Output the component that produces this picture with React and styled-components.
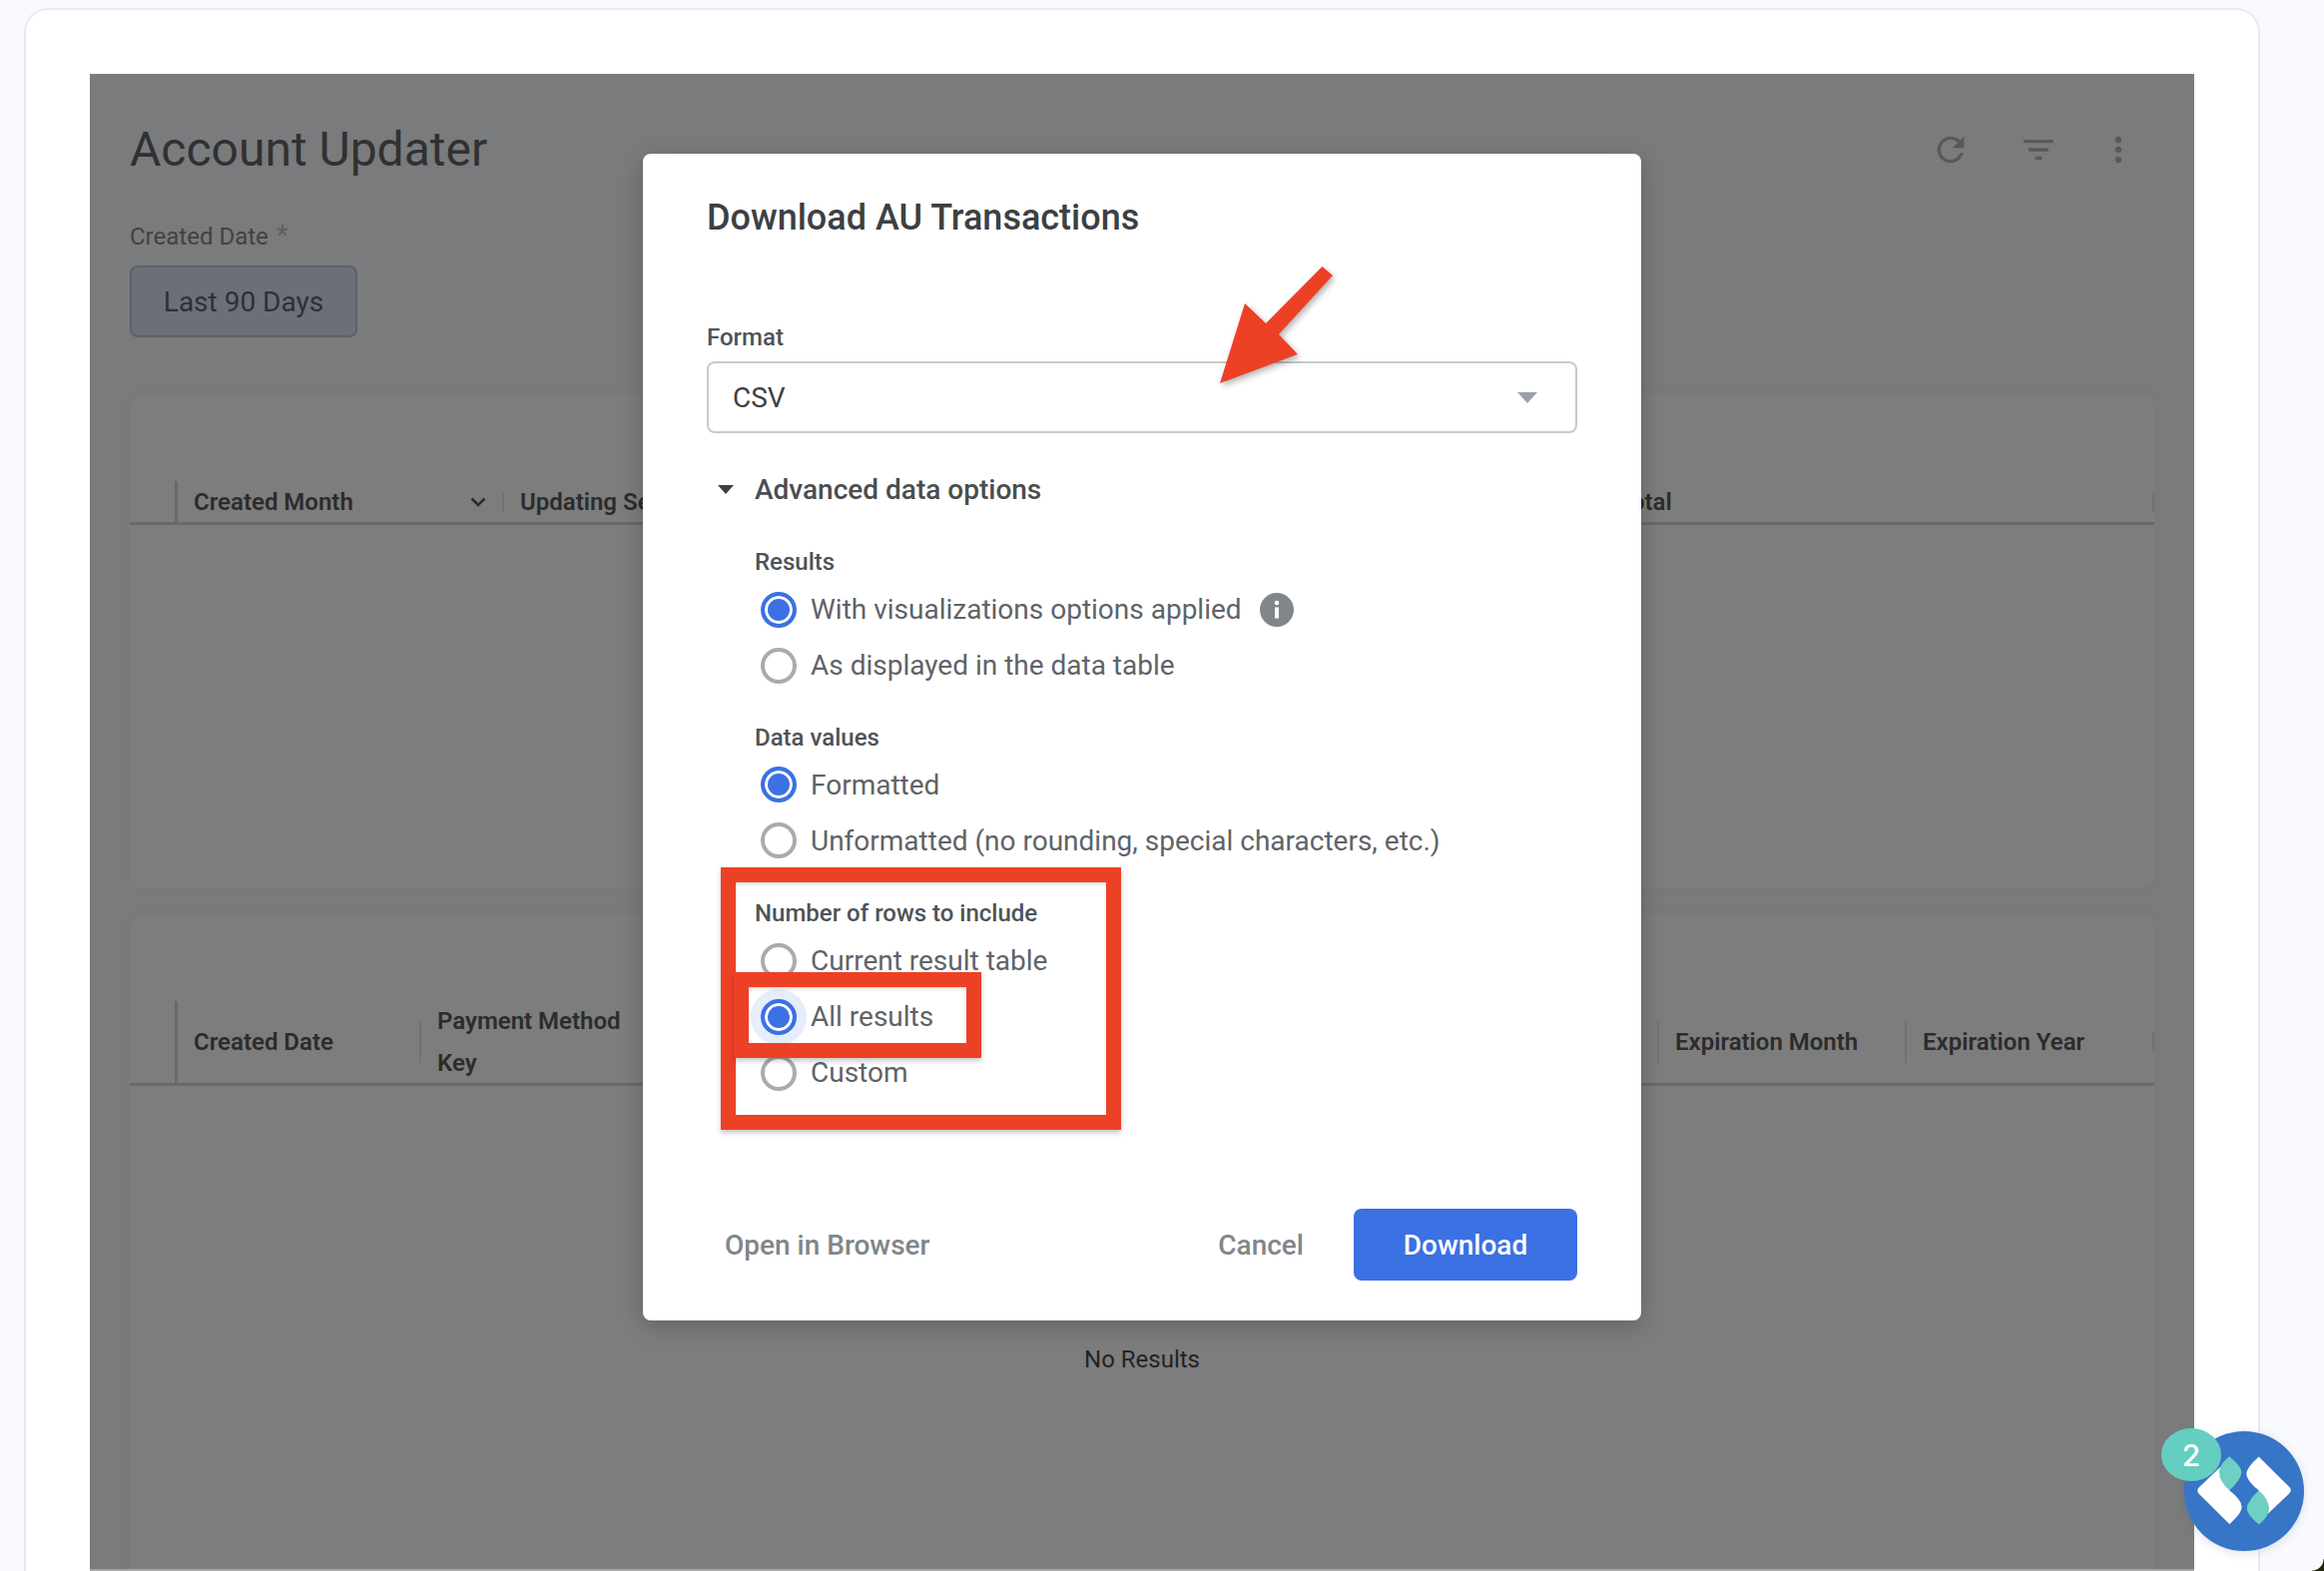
import React from "react";
import styled, { createGlobalStyle } from "styled-components";

const Global = createGlobalStyle`
  html, body { margin: 0; padding: 0; background: #f9fafe; }
  body { width: 2328px; height: 1574px; overflow: hidden; font-family: Roboto, "Liberation Sans", sans-serif; }
  * { box-sizing: border-box; }
`;

const Page = styled.div`
  position: relative;
  width: 2328px;
  height: 1574px;
  overflow: hidden;
  padding: 8px 0 0 24px;
`;

const ScreenCorner = styled.div`
  position: absolute;
  right: 0;
  bottom: 0;
  width: 12px;
  height: 12px;
  background: radial-gradient(circle at 0 0, transparent 11px, #23260f 12px);
`;

const Sheet = styled.div`
  width: 2240px;
  height: 1600px;
  background: #fff;
  border: 2px solid #e8eaf1;
  border-radius: 24px;
  padding: 64px 64px 0 64px;
`;

const Panel = styled.div`
  height: 1500px;
  background: #7a7b7c;
  border-bottom: 2px solid #a6a6a6;
  padding: 48px 40px 0;
  overflow: hidden;
`;

const TitleRow = styled.div`
  display: flex;
  align-items: center;
  justify-content: space-between;
  height: 56px;
`;

const Title = styled.h1`
  margin: 0;
  font-size: 48px;
  font-weight: 400;
  line-height: 56px;
  color: #303133;
`;

const Tools = styled.div`
  display: flex;
  gap: 40px;
  margin-right: 16px;
  color: #58595b;
`;

const ToolIcon = styled.svg`
  display: block;
  width: 40px;
  height: 40px;
  fill: currentColor;
  margin-right: ${(p) => p.$after || 0}px;
`;

const FieldLabel = styled.div`
  margin-top: 44px;
  height: 30px;
  font-size: 24px;
  line-height: 30px;
  color: #414244;
  span { color: #5f6062; font-size: 28px; line-height: 0; margin-left: 2px; }
`;

const RangeButton = styled.div`
  display: flex;
  align-items: center;
  justify-content: center;
  width: 228px;
  height: 72px;
  margin-top: 14px;
  background: #6b7078;
  border: 2px solid #5f6165;
  border-radius: 8px;
  font-size: 28px;
  color: #2f3033;
`;

const Card = styled.section`
  height: ${(p) => p.$h}px;
  margin-top: ${(p) => p.$top}px;
  padding-top: ${(p) => p.$pad}px;
  background: #7d7d7d;
  border-radius: 14px;
  box-shadow: 0 0 16px rgba(0, 0, 0, 0.035);
`;

const HeaderRow = styled.div`
  display: flex;
  align-items: center;
  height: ${(p) => p.$h}px;
  border-bottom: 3px solid #69696a;
`;

const Gutter = styled.div`
  flex: none;
  align-self: stretch;
  width: 48px;
  border-right: 3px solid #69696a;
`;

const HeadCell = styled.div`
  display: flex;
  align-items: center;
  justify-content: space-between;
  flex: none;
  width: ${(p) => p.$w}px;
  padding: 0 ${(p) => p.$pr || 0}px 0 16px;
  font-size: 24px;
  font-weight: 600;
  line-height: 42px;
  color: #2b2c2d;
`;

const StackedName = styled.div`
  display: block;
`;

const CellDivider = styled.div`
  flex: none;
  width: 2px;
  height: ${(p) => p.$h}px;
  background: #727273;
`;

const Empty = styled.div`
  margin-top: 259px;
  text-align: center;
  font-size: 24px;
  line-height: 30px;
  color: #232324;
`;

const Dialog = styled.div`
  position: absolute;
  left: 644px;
  top: 154px;
  isolation: isolate;
  display: flex;
  flex-direction: column;
  width: 1000px;
  height: 1169px;
  padding: 42px 64px 40px;
  background: #fff;
  border-radius: 8px;
  box-shadow: 0 6px 24px rgba(0, 0, 0, 0.22);
`;

const DialogTitle = styled.h2`
  margin: 0;
  font-size: 36px;
  font-weight: 500;
  line-height: 44px;
  color: #3c4043;
`;

const SmallLabel = styled.div`
  margin-top: ${(p) => p.$top}px;
  font-size: 24px;
  font-weight: 500;
  line-height: 30px;
  color: #4f5256;
`;

const Select = styled.div`
  display: flex;
  align-items: center;
  justify-content: space-between;
  height: 72px;
  margin-top: 9px;
  padding: 0 38px 0 24px;
  border: 2px solid #c8c9cb;
  border-radius: 8px;
  font-size: 28px;
  color: #3c4043;
`;

const Caret = styled.div`
  width: 0;
  height: 0;
  border-left: ${(p) => p.$w / 2}px solid transparent;
  border-right: ${(p) => p.$w / 2}px solid transparent;
  border-top: ${(p) => p.$h}px solid ${(p) => p.$color};
`;

const Disclosure = styled.div`
  display: flex;
  align-items: center;
  gap: 21px;
  height: 36px;
  margin-top: 38px;
  padding-left: 11px;
  font-size: 28px;
  font-weight: 500;
  color: #4a4d51;
`;

const Options = styled.div`
  padding-left: 48px;
`;

const RadioGroup = styled.div`
  margin-top: 4.5px;
`;

const RadioRow = styled.div`
  display: flex;
  align-items: center;
  height: 56px;
  padding-left: 6px;
  font-size: 28px;
  color: #5f6368;
`;

const Radio = styled.span`
  position: relative;
  flex: none;
  width: 36px;
  height: 36px;
  margin-right: 14px;
  border-radius: 50%;
  border: 4px solid ${(p) => (p.$on ? "#3b71e3" : "#a9abad")};
  background: ${(p) => (p.$on ? "#3b71e3" : "#fff")};
  box-shadow: ${(p) => (p.$on ? "inset 0 0 0 3px #fff" : "none")};
  ${(p) =>
    p.$halo &&
    `&::before {
      content: "";
      position: absolute;
      inset: -14px;
      border-radius: 50%;
      background: #e6edfb;
      z-index: -1;
    }`}
`;

const InfoIcon = styled.svg`
  width: 34px;
  height: 34px;
  margin-left: 18px;
`;

const Footer = styled.div`
  display: flex;
  align-items: center;
  margin-top: auto;
  font-size: 28px;
  font-weight: 500;
  color: #80868b;
`;

const OpenLink = styled.div`
  margin-left: 18px;
`;

const CancelLink = styled.div`
  margin-left: auto;
  margin-right: 50px;
`;

const DownloadButton = styled.div`
  display: flex;
  align-items: center;
  justify-content: center;
  width: 224px;
  height: 72px;
  border-radius: 8px;
  background: #3b71e3;
  color: #fff;
`;

const Callout = styled.div`
  position: absolute;
  left: ${(p) => p.$x}px;
  top: ${(p) => p.$y}px;
  width: ${(p) => p.$w}px;
  height: ${(p) => p.$h}px;
  border: 15px solid #ec4125;
  box-shadow: 0 3px 5px rgba(0, 0, 0, 0.22), inset 0 3px 4px -2px rgba(0, 0, 0, 0.22);
`;

const ArrowMark = styled.svg`
  position: absolute;
  left: 1210px;
  top: 260px;
  width: 135px;
  height: 135px;
  filter: drop-shadow(2px 3px 3px rgba(0, 0, 0, 0.3));
`;

const Widget = styled.div`
  position: absolute;
  left: 2188px;
  top: 1434px;
  width: 120px;
  height: 120px;
  border-radius: 50%;
  background: #3775c6;
  box-shadow: 0 2px 10px rgba(40, 60, 120, 0.15);
`;

const WidgetLogo = styled.svg`
  display: block;
  width: 120px;
  height: 120px;
`;

const Badge = styled.div`
  position: absolute;
  left: -23px;
  top: -3px;
  display: flex;
  align-items: center;
  justify-content: center;
  width: 60px;
  height: 53px;
  border-radius: 50%;
  background: #64cfc0;
  color: #fff;
  font-family: Inter, Roboto, sans-serif;
  font-size: 30px;
  font-weight: 500;
`;

const LeftMark = () => (
  <>
    <path d="M15 56 L36 36 L45.3 59.3 Q57.7 69 57.7 76 Q57.7 82 45.3 93 L15 63 Q11.5 59.5 15 56Z" fill="#fff" />
    <path d="M45.3 25.3 Q57.3 35 57.3 41 Q57.3 48 45.3 59.3 Q35 50 35 41 Q35 33 45.3 25.3Z" fill="#6dd0c3" />
  </>
);

const Option = ({ on, halo, children }) => (
  <RadioRow>
    <Radio $on={on} $halo={halo} />
    {children}
  </RadioRow>
);

export default function App() {
  return (
    <Page>
      <Global />
      <Sheet>
        <Panel>
          <TitleRow>
            <Title>Account Updater</Title>
            <Tools>
              <ToolIcon viewBox="0 0 24 24" $after={8}>
                <path d="M17.65 6.35C16.2 4.9 14.21 4 12 4c-4.42 0-7.99 3.58-7.99 8s3.57 8 7.99 8c3.73 0 6.84-2.55 7.73-6h-2.08c-.82 2.33-3.04 4-5.65 4-3.31 0-6-2.69-6-6s2.69-6 6-6c1.66 0 3.14.69 4.22 1.78L13 11h7V4l-2.35 2.35z" />
              </ToolIcon>
              <ToolIcon viewBox="0 0 24 24">
                <path d="M10 18h4v-2h-4v2zM3 6v2h18V6H3zm3 7h12v-2H6v2z" />
              </ToolIcon>
              <ToolIcon viewBox="0 0 24 24">
                <path d="M12 8c1.1 0 2-.9 2-2s-.9-2-2-2-2 .9-2 2 .9 2 2 2zm0 2c-1.1 0-2 .9-2 2s.9 2 2 2 2-.9 2-2-.9-2-2-2zm0 6c-1.1 0-2 .9-2 2s.9 2 2 2 2-.9 2-2-.9-2-2-2z" />
              </ToolIcon>
            </Tools>
          </TitleRow>
          <FieldLabel>
            Created Date <span>*</span>
          </FieldLabel>
          <RangeButton>Last 90 Days</RangeButton>

          <Card $top={56} $h={496} $pad={88}>
            <HeaderRow $h={44}>
              <Gutter />
              <HeadCell $w={325} $pr={16}>
                Created Month
                <svg width="16" height="10" viewBox="0 0 16 10" fill="none" stroke="#2b2c2d" strokeWidth="2.5">
                  <path d="M1.5 1.5 L8 8 L14.5 1.5" />
                </svg>
              </HeadCell>
              <CellDivider $h={20} />
              <HeadCell $w={1100}>Updating Service</HeadCell>
              <HeadCell $w={551}>Total</HeadCell>
              <CellDivider $h={20} />
            </HeaderRow>
          </Card>

          <Card $top={25} $h={900} $pad={88}>
            <HeaderRow $h={85}>
              <Gutter />
              <HeadCell $w={242}>Created Date</HeadCell>
              <CellDivider $h={42} />
              <HeadCell $w={1238}>
                <StackedName>
                  Payment Method
                  <br />
                  Key
                </StackedName>
              </HeadCell>
              <CellDivider $h={42} />
              <HeadCell $w={246}>Expiration Month</HeadCell>
              <CellDivider $h={42} />
              <HeadCell $w={246}>Expiration Year</HeadCell>
              <CellDivider $h={20} />
            </HeaderRow>
            <Empty>No Results</Empty>
          </Card>
        </Panel>
      </Sheet>

      <Dialog>
        <DialogTitle>Download AU Transactions</DialogTitle>
        <SmallLabel $top={83}>Format</SmallLabel>
        <Select>
          CSV
          <Caret $w={20} $h={11} $color="#9aa0a6" />
        </Select>
        <Disclosure>
          <Caret $w={17} $h={9} $color="#3c4043" />
          Advanced data options
        </Disclosure>
        <Options>
          <SmallLabel $top={40}>Results</SmallLabel>
          <RadioGroup>
            <Option on>
              With visualizations options applied
              <InfoIcon viewBox="0 0 34 34">
                <circle cx="17" cy="17" r="17" fill="#80868b" />
                <rect x="15" y="14.5" width="4" height="11" fill="#fff" />
                <circle cx="17" cy="10" r="2.3" fill="#fff" />
              </InfoIcon>
            </Option>
            <Option>As displayed in the data table</Option>
          </RadioGroup>
          <SmallLabel $top={29}>Data values</SmallLabel>
          <RadioGroup>
            <Option on>Formatted</Option>
            <Option>Unformatted (no rounding, special characters, etc.)</Option>
          </RadioGroup>
          <SmallLabel $top={30}>Number of rows to include</SmallLabel>
          <RadioGroup>
            <Option>Current result table</Option>
            <Option on halo>All results</Option>
            <Option>Custom</Option>
          </RadioGroup>
        </Options>
        <Footer>
          <OpenLink>Open in Browser</OpenLink>
          <CancelLink>Cancel</CancelLink>
          <DownloadButton>Download</DownloadButton>
        </Footer>
      </Dialog>

      <Callout $x={722} $y={869} $w={401} $h={263} />
      <Callout $x={735} $y={974} $w={248} $h={86} />
      <ArrowMark viewBox="1210 260 135 135">
        <polygon points="1222,384 1247,304 1268,324 1324.5,267 1335,276 1281,335 1300,355" fill="#ec4125" />
      </ArrowMark>

      <Widget>
        <WidgetLogo viewBox="0 0 120 120">
          <LeftMark />
          <g transform="rotate(180 60 59.3)">
            <LeftMark />
          </g>
        </WidgetLogo>
        <Badge>2</Badge>
      </Widget>
      <ScreenCorner />
    </Page>
  );
}
